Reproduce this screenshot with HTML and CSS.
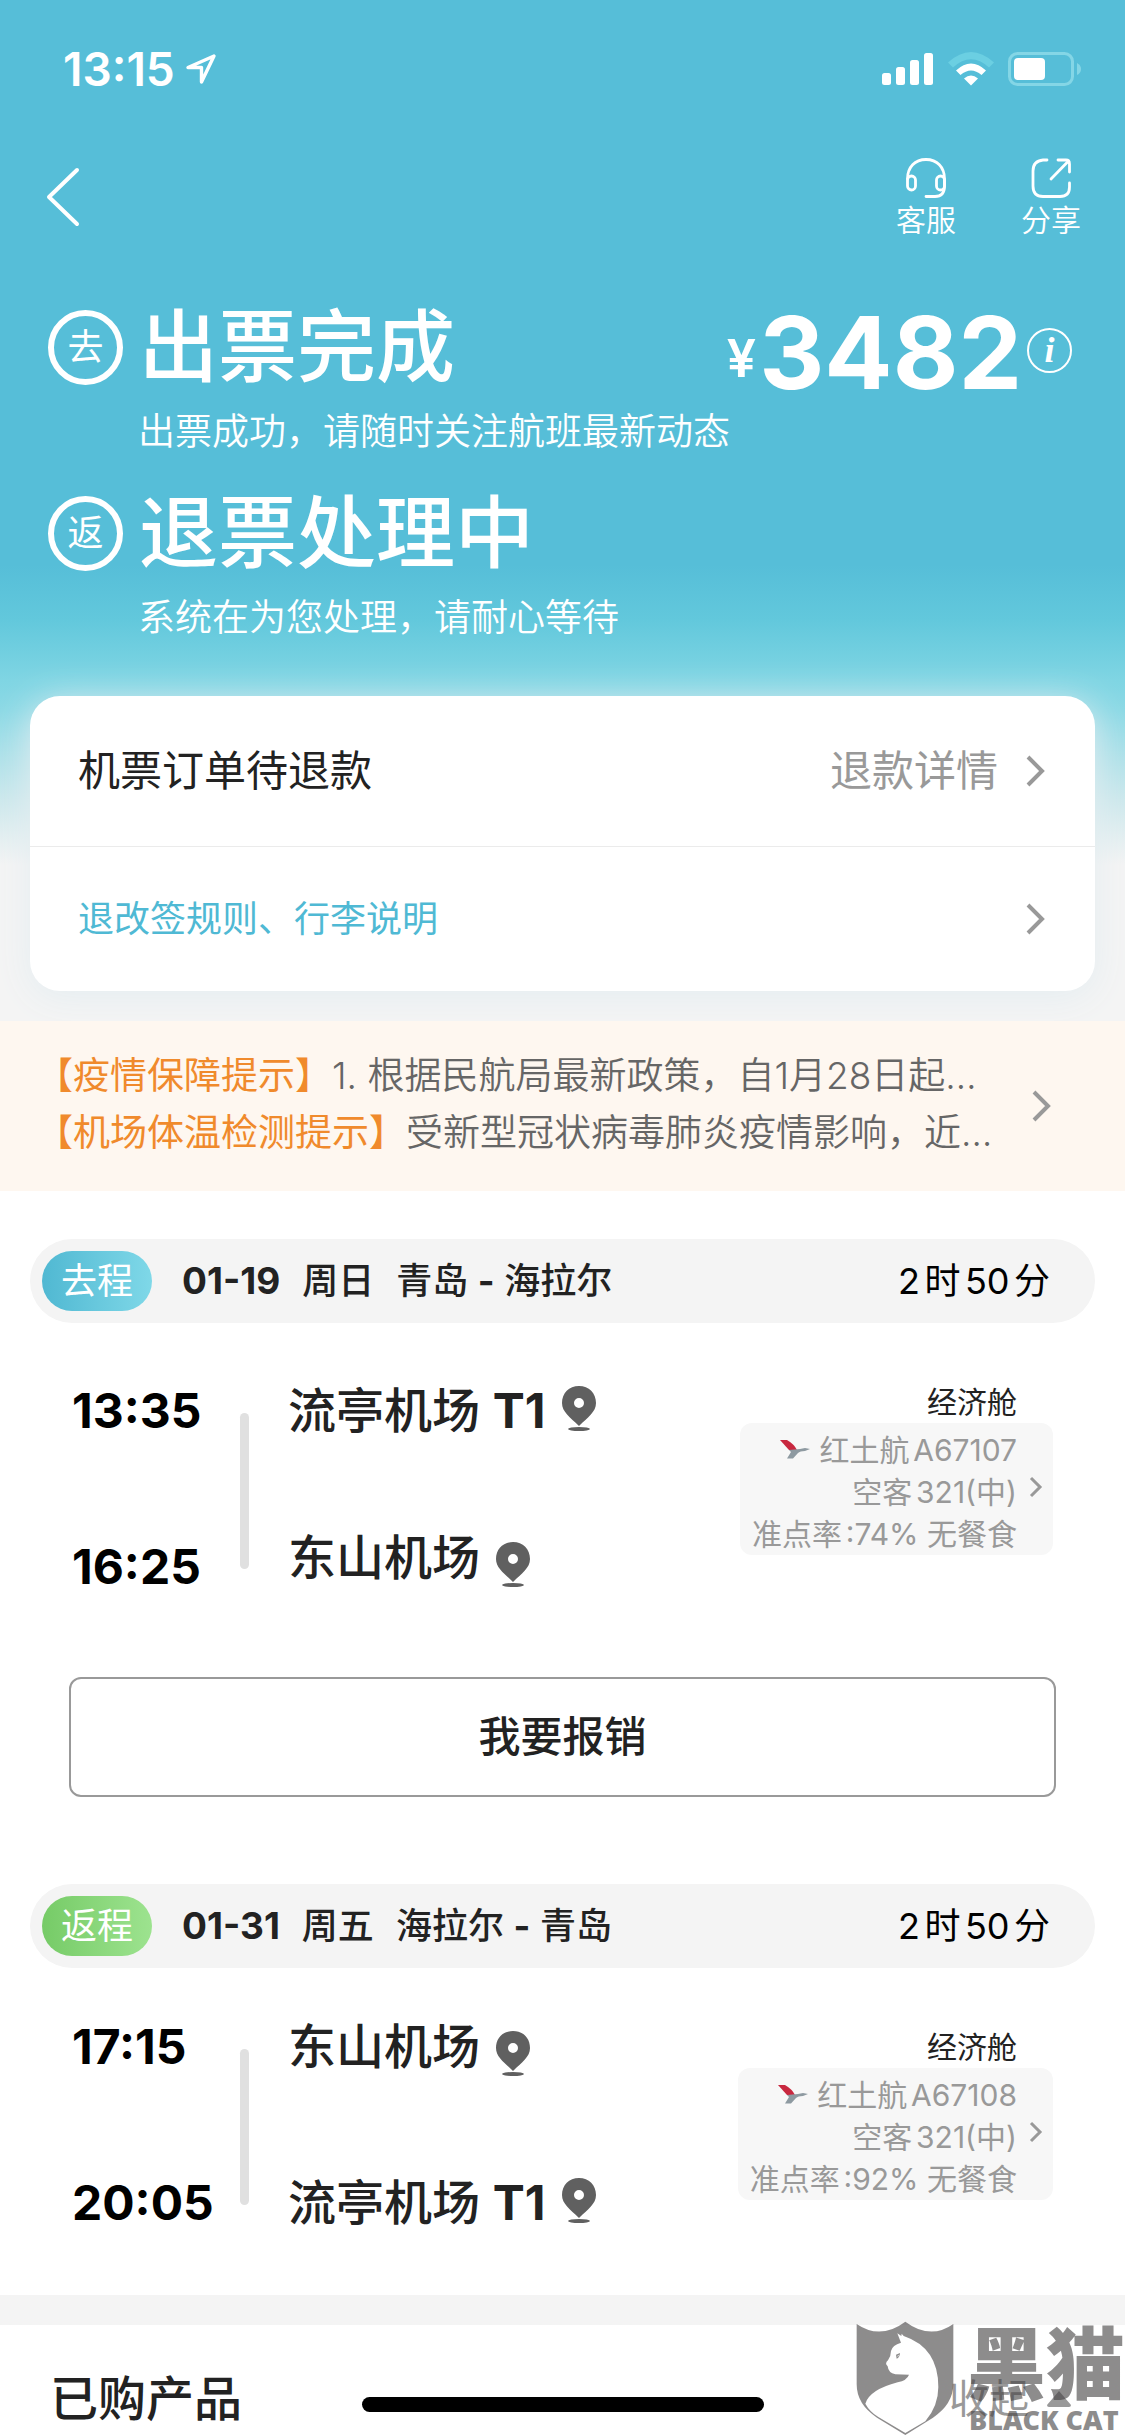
FILE: index.html
```html
<!DOCTYPE html>
<html lang="zh-CN">
<head>
    <meta charset="UTF-8">
    <meta name="viewport" content="width=device-width, initial-scale=1.0">
    <title>订单详情</title>
    <link rel="stylesheet" href="styles.css">
</head>
<body>
    <div class="top">
        <div class="status-bar">
            <div class="clock">
                <span>13:15</span>
                <svg width="32" height="32" viewBox="0 0 32 32" fill="none" stroke="#fff" stroke-width="3.4" stroke-linejoin="round"><path d="M29 3 3 14.500H16.500V29Z"/></svg>
            </div>
            <div class="signals">
                <svg width="52" height="34" viewBox="0 0 52 34" fill="#fff"><rect x="0" y="21" width="9" height="12" rx="2.500"/><rect x="14" y="15" width="9" height="18" rx="2.500"/><rect x="28" y="8" width="9" height="25" rx="2.500"/><rect x="42" y="1" width="9" height="32" rx="2.500"/></svg>
                <svg width="46" height="34" viewBox="0 0 46 34" fill="#fff"><path d="M0 10.500Q23-10.500 46 10.500L41 15.500Q23-1 5 15.500Z" fill="#6bcfe2"/><path d="M8 18.500Q23 4.500 38 18.500L33.500 23Q23 14 12.500 23Z"/><path d="M16 26.500Q23 20.500 30 26.500L23 33.500Z"/></svg>
                <svg width="74" height="34" viewBox="0 0 74 34"><rect x="1.500" y="1.500" width="63" height="31" rx="8" fill="none" stroke="#84d6e6" stroke-width="3"/><rect x="6" y="6" width="31" height="22" rx="4" fill="#fff"/><path d="M69 11Q73 13 73 17T69 23Z" fill="#84d6e6"/></svg>
            </div>
        </div>

        <div class="nav">
            <button class="back" aria-label="返回">
                <svg width="34" height="60" viewBox="0 0 34 60" fill="none" stroke="#fff" stroke-width="4" stroke-linecap="round" stroke-linejoin="round"><path d="M31 3 3 30 31 57"/></svg>
            </button>
            <div class="nav-actions">
                <button class="nav-btn">
                    <svg width="42" height="42" viewBox="0 0 42 42" fill="none" stroke="#fff" stroke-width="2.800" stroke-linecap="round"><path d="M2.500 22C2.500 10 10 2.500 21 2.500S39.500 10 39.500 22V29C39.500 36 36 39.500 30 39.500H21"/><rect x="2.500" y="19" width="8" height="14" rx="4"/><rect x="31.500" y="19" width="8" height="14" rx="4"/></svg>
                    客服
                </button>
                <button class="nav-btn">
                    <svg width="42" height="42" viewBox="0 0 42 42" fill="none" stroke="#fff" stroke-width="2.800" stroke-linecap="round" stroke-linejoin="round"><path d="M17 3H13Q3 4 3 14V29Q3 39.500 13 39.500H30Q39.500 39.500 39.500 30V26M28 3H36Q39.500 3 39.500 7V15M38.500 4 21 22"/></svg>
                    分享
                </button>
            </div>
        </div>

        <div class="hero">
            <div class="state">
                <div class="state-row">
                    <span class="ring">去</span>
                    <h1 class="state-title">出票完成</h1>
                    <div class="price">
                        <span class="yen">¥</span><span class="amount">3482</span>
                        <button class="info" aria-label="价格明细">i</button>
                    </div>
                </div>
                <p class="state-sub">出票成功，请随时关注航班最新动态</p>
            </div>
            <div class="state">
                <div class="state-row">
                    <span class="ring">返</span>
                    <h1 class="state-title">退票处理中</h1>
                </div>
                <p class="state-sub">系统在为您处理，请耐心等待</p>
            </div>
        </div>

        <div class="card">
            <a class="card-row" href="#">
                <span>机票订单待退款</span>
                <span class="card-more">退款详情</span>
                <svg class="arrow" viewBox="0 0 20 34"><path d="M3 3 17 17 3 31"/></svg>
            </a>
            <a class="card-row card-row--rules" href="#">
                <span>退改签规则、行李说明</span>
                <svg class="arrow" viewBox="0 0 20 34"><path d="M3 3 17 17 3 31"/></svg>
            </a>
        </div>
    </div>

    <a class="notice" href="#">
        <div class="notice-text">
            <p><em>【疫情保障提示】</em>1. 根据民航局最新政策，自1月28日起…</p>
            <p><em>【机场体温检测提示】</em>受新型冠状病毒肺炎疫情影响，近…</p>
        </div>
        <svg class="arrow" viewBox="0 0 20 34"><path d="M3 3 17 17 3 31"/></svg>
    </a>

    <main class="trips">
        <section class="trip">
            <div class="trip-head">
                <span class="tag">去程</span>
                <h2 class="trip-name"><span class="date">01-19</span><span>周日</span><span>青岛 <b>-</b> 海拉尔</span></h2>
                <span class="duration">2时50分</span>
            </div>
            <div class="leg">
                <div class="route route--terminal">
                    <div class="times"><span>13:35</span><span>16:25</span></div>
                    <div class="line"></div>
                    <div class="airports">
                        <div class="airport"><span>流亭机场 <b>T1</b></span>
                            <svg class="pin" viewBox="0 0 34 45"><path fill-rule="evenodd" d="M17 0C7 0 0 7 0 17 0 26 8 31 17 40 26 31 34 26 34 17 34 7 27 0 17 0ZM17 12A5 5 0 1 1 17 22 5 5 0 1 1 17 12Z"/><ellipse cx="17" cy="43" rx="11" ry="2"/></svg>
                        </div>
                        <div class="airport"><span>东山机场</span>
                            <svg class="pin pin--low" viewBox="0 0 34 45"><path fill-rule="evenodd" d="M17 0C7 0 0 7 0 17 0 26 8 31 17 40 26 31 34 26 34 17 34 7 27 0 17 0ZM17 12A5 5 0 1 1 17 22 5 5 0 1 1 17 12Z"/><ellipse cx="17" cy="43" rx="11" ry="2"/></svg>
                        </div>
                    </div>
                </div>
                <div class="cabin">
                    <p class="cabin-name">经济舱</p>
                    <a class="plane" href="#">
                        <div class="plane-text">
                            <p><svg class="airline" viewBox="0 0 30 20"><path d="M0 1 7 1Q14 5 17 11L9 11Z" fill="#c8283f"/><path d="M9 11 20 10 25 9 30 10 25 12Q20 12 18 14L13 19.500H7L11 13Z" fill="#8e9aa1"/></svg>红土航A67107</p>
                            <p>空客321(中)</p>
                            <p>准点率:74% 无餐食</p>
                        </div>
                        <svg class="arrow arrow--small" viewBox="0 0 14 22"><path d="M2 2 11 11 2 20"/></svg>
                    </a>
                </div>
            </div>
            <button class="reimburse">我要报销</button>
        </section>

        <section class="trip">
            <div class="trip-head">
                <span class="tag tag--back">返程</span>
                <h2 class="trip-name"><span class="date">01-31</span><span>周五</span><span>海拉尔 <b>-</b> 青岛</span></h2>
                <span class="duration">2时50分</span>
            </div>
            <div class="leg">
                <div class="route">
                    <div class="times"><span>17:15</span><span>20:05</span></div>
                    <div class="line"></div>
                    <div class="airports">
                        <div class="airport"><span>东山机场</span>
                            <svg class="pin pin--low" viewBox="0 0 34 45"><path fill-rule="evenodd" d="M17 0C7 0 0 7 0 17 0 26 8 31 17 40 26 31 34 26 34 17 34 7 27 0 17 0ZM17 12A5 5 0 1 1 17 22 5 5 0 1 1 17 12Z"/><ellipse cx="17" cy="43" rx="11" ry="2"/></svg>
                        </div>
                        <div class="airport"><span>流亭机场 <b>T1</b></span>
                            <svg class="pin" viewBox="0 0 34 45"><path fill-rule="evenodd" d="M17 0C7 0 0 7 0 17 0 26 8 31 17 40 26 31 34 26 34 17 34 7 27 0 17 0ZM17 12A5 5 0 1 1 17 22 5 5 0 1 1 17 12Z"/><ellipse cx="17" cy="43" rx="11" ry="2"/></svg>
                        </div>
                    </div>
                </div>
                <div class="cabin">
                    <p class="cabin-name">经济舱</p>
                    <a class="plane" href="#">
                        <div class="plane-text">
                            <p><svg class="airline" viewBox="0 0 30 20"><path d="M0 1 7 1Q14 5 17 11L9 11Z" fill="#c8283f"/><path d="M9 11 20 10 25 9 30 10 25 12Q20 12 18 14L13 19.500H7L11 13Z" fill="#8e9aa1"/></svg>红土航A67108</p>
                            <p>空客321(中)</p>
                            <p>准点率:92% 无餐食</p>
                        </div>
                        <svg class="arrow arrow--small" viewBox="0 0 14 22"><path d="M2 2 11 11 2 20"/></svg>
                    </a>
                </div>
            </div>
        </section>
    </main>

    <section class="products">
        <h2 class="products-title">已购产品</h2>
        <button class="fold">收起 <svg width="24" height="16" viewBox="0 0 24 16"><path d="M12 0 24 14Q24 16 22 16H2Q0 16 0 14Z" fill="#999"/></svg></button>
    </section>

    <div class="home-bar"></div>

    <div class="watermark">
        <svg width="98" height="115" viewBox="0 0 292 345"><path fill-rule="evenodd" d="M1 9Q72 58 147 2 222 58 291 9V190Q290 250 230 290L147 342 62 290Q1 250 1 190ZM123 37 134 65Q108 72 104 90 104 105 95 118 84 128 94 136 96 156 117 160L158 161Q152 178 124 184 40 206 27 248 40 272 66 288L147 336 207 301Q246 255 246 198 246 80 142 45L136 38 135 45Z"/><path d="M119 101 131 96Q130 110 121 113ZM125 102 123 108 128 104Z" fill-rule="evenodd"/></svg>
        <div class="watermark-text">
            <span class="watermark-name">黑猫</span>
            <span class="watermark-en">BLACK CAT</span>
        </div>
    </div>
</body>
</html>
```
FILE: styles.css
```css
:root {
    --blue: #56bed8;
    --text: #222;
    --gray: #999;
    --light: #f4f4f4;
}

* {
    margin: 0;
    padding: 0;
    box-sizing: border-box;
}

body {
    position: relative;
    min-height: 100vh;
    overflow-x: hidden;
    background-color: #fff;
    color: var(--text);
    font-family: Inter, "Noto Sans CJK SC", sans-serif;
    font-size: 36px;
    line-height: 48px;
    text-autospace: normal;
}

a {
    color: inherit;
    text-decoration: none;
}

button {
    border: none;
    background: none;
    color: inherit;
    font-family: inherit;
    line-height: inherit;
}

svg {
    display: block;
    flex-shrink: 0;
}

.arrow {
    width: 20px;
    height: 34px;
    fill: none;
    stroke: var(--gray);
    stroke-width: 4;
}

.arrow--small {
    width: 14px;
    height: 22px;
    stroke-width: 3;
}

/* Topo azul */
.top {
    padding-bottom: 30px;
    background: linear-gradient(to bottom, var(--blue) 565px, #62c8dc 620px, #7fd5e3 680px, #8cd9e5 710px, #cce8ec 800px, var(--light) 865px);
    color: #fff;
}

.status-bar {
    display: flex;
    align-items: center;
    justify-content: space-between;
    height: 138px;
    padding: 0 43px 0 63px;
}

.clock {
    display: flex;
    align-items: center;
    gap: 10px;
    font-size: 46px;
    font-weight: 600;
}

.signals {
    display: flex;
    gap: 14px;
}

.nav {
    display: flex;
    align-items: center;
    justify-content: space-between;
    height: 118px;
    padding: 0 44px 0 46px;
}

.nav-actions {
    display: flex;
    gap: 65px;
}

.nav-btn {
    display: flex;
    flex-direction: column;
    align-items: center;
    gap: 3px;
    font-size: 30px;
    font-weight: 350;
    line-height: 36px;
}

.hero {
    display: flex;
    flex-direction: column;
    gap: 38px;
    padding: 52px 53px 54px 48px;
}

.state-row {
    display: flex;
    align-items: center;
    height: 78px;
}

.ring {
    width: 75px;
    height: 75px;
    border: 6px solid #fff;
    border-radius: 50%;
    font-size: 36px;
    line-height: 62px;
    text-align: center;
}

.state-title {
    margin-left: 16px;
    font-size: 79px;
    font-weight: 500;
    line-height: 78px;
}

.state-sub {
    margin: 22px 0 0 90px;
    font-size: 37px;
    font-weight: 350;
    line-height: 48px;
}

.price {
    display: flex;
    align-items: center;
    margin-left: auto;
    font-weight: 700;
}

.yen {
    margin-top: 24px;
    font-size: 52px;
    font-weight: 600;
}

.amount {
    margin: 10px 5px 0 3px;
    font-size: 101px;
    line-height: 90px;
}

.info {
    width: 45px;
    height: 45px;
    margin-top: 6px;
    border: 2px solid #fff;
    border-radius: 50%;
    font: italic bold 36px/38px "Liberation Serif", serif;
}

.card {
    margin: 0 30px;
    border-radius: 30px;
    background-color: #fff;
    box-shadow: 0 6px 36px #e4edf1;
    color: var(--text);
}

.card-row {
    display: flex;
    align-items: center;
    height: 150px;
    padding: 0 50px 0 48px;
    font-size: 42px;
}

.card-row .arrow {
    margin-left: auto;
}

.card-more {
    margin-left: auto;
    color: var(--gray);
}

.card-more + .arrow {
    margin-left: 27px;
}

.card-row--rules {
    height: 145px;
    border-top: 1px solid #ebebeb;
    color: #4fb9d4;
    font-size: 36px;
}

/* Avisos */
.notice {
    display: flex;
    align-items: center;
    justify-content: space-between;
    height: 170px;
    padding: 0 74px 0 36px;
    background-color: #fef7f0;
    color: #666;
    text-autospace: no-autospace;
}

.notice-text {
    margin-bottom: 4px;
    font-size: 37px;
    font-weight: 350;
    line-height: 57px;
}

.notice em {
    color: #f08a2c;
    font-style: normal;
    font-weight: 400;
}

/* Trechos da viagem */
.trips {
    display: flex;
    flex-direction: column;
    gap: 87px;
    padding: 48px 30px 68px;
}

.trip-head {
    display: flex;
    align-items: center;
    height: 84px;
    padding: 0 45px 0 12px;
    border-radius: 42px;
    background-color: var(--light);
}

.tag {
    width: 110px;
    border-radius: 30px;
    background: linear-gradient(to right, #50b8d2, #7fd8e8);
    color: #fff;
    line-height: 60px;
    text-align: center;
}

.tag--back {
    background: linear-gradient(to right, #76cb67, #9de38f);
}

.trip-name {
    display: flex;
    gap: 22px;
    margin-left: 30px;
    font-size: 36px;
    font-weight: 500;
}

.date {
    font-size: 37px;
    font-weight: 700;
}

.duration {
    margin-left: auto;
    color: #000;
}

.leg {
    display: flex;
    justify-content: space-between;
    padding: 55px 42px 0;
}

.route {
    display: flex;
}

.route--terminal {
    padding-top: 9px;
}

.times {
    display: flex;
    flex-direction: column;
    gap: 108px;
    width: 168px;
    color: #000;
    font-size: 48px;
    font-weight: 700;
    line-height: 48px;
}

.line {
    width: 9px;
    height: 156px;
    margin: 26px 39px 0 0;
    border-radius: 5px;
    background-color: #e0e0e0;
}

.airports {
    display: flex;
    flex-direction: column;
    gap: 108px;
}

.route--terminal .airports {
    gap: 99px;
}

.airport {
    display: flex;
    align-items: center;
    gap: 16px;
    height: 48px;
    font-size: 48px;
    font-weight: 500;
    line-height: 48px;
}

.pin {
    width: 34px;
    height: 45px;
    margin-bottom: 6px;
    fill: #606060;
}

.pin--low {
    margin: 12px 0 0;
}

.cabin {
    display: flex;
    flex-direction: column;
    align-items: flex-end;
    margin-top: 3px;
    font-size: 30px;
    line-height: 42px;
    text-align: right;
}

.cabin-name {
    padding-right: 36px;
}

.plane {
    display: flex;
    align-items: center;
    gap: 12px;
    padding: 6px 10px 0 12px;
    border-radius: 12px;
    background-color: #f7f7f7;
    color: var(--gray);
}

.plane .arrow {
    margin-bottom: 10px;
}

.airline {
    display: inline-block;
    width: 30px;
    height: 20px;
    margin-right: 9px;
    vertical-align: 2px;
}

.reimburse {
    display: block;
    width: calc(100% - 78px);
    height: 120px;
    margin: 86px auto 0;
    border: 2px solid var(--gray);
    border-radius: 12px;
    font-size: 42px;
    font-weight: 500;
}

/* Produtos */
.products {
    display: flex;
    align-items: center;
    justify-content: space-between;
    padding: 50px 54px 13px 50px;
    border-top: 30px solid var(--light);
}

.products-title {
    font-size: 48px;
    font-weight: 500;
    line-height: 48px;
}

.fold {
    display: flex;
    align-items: center;
    gap: 18px;
    color: var(--gray);
    font-size: 40px;
    line-height: 48px;
}

.home-bar {
    position: absolute;
    bottom: 24px;
    left: 50%;
    width: 402px;
    height: 15px;
    border-radius: 8px;
    background-color: #000;
    transform: translateX(-50%);
}

/* Marca d'água */
.watermark {
    position: absolute;
    right: 0;
    bottom: 0;
    display: flex;
    gap: 13px;
    color: #434041;
    fill: #434041;
    opacity: 0.6;
    pointer-events: none;
}

.watermark-text {
    display: flex;
    flex-direction: column;
}

.watermark-name {
    margin-top: 6px;
    font-size: 79px;
    font-weight: 900;
    line-height: 76px;
}

.watermark-en {
    padding-left: 2px;
    font-family: "Open Sans", sans-serif;
    font-size: 27px;
    font-weight: 800;
    line-height: 33px;
    white-space: nowrap;
}
```
